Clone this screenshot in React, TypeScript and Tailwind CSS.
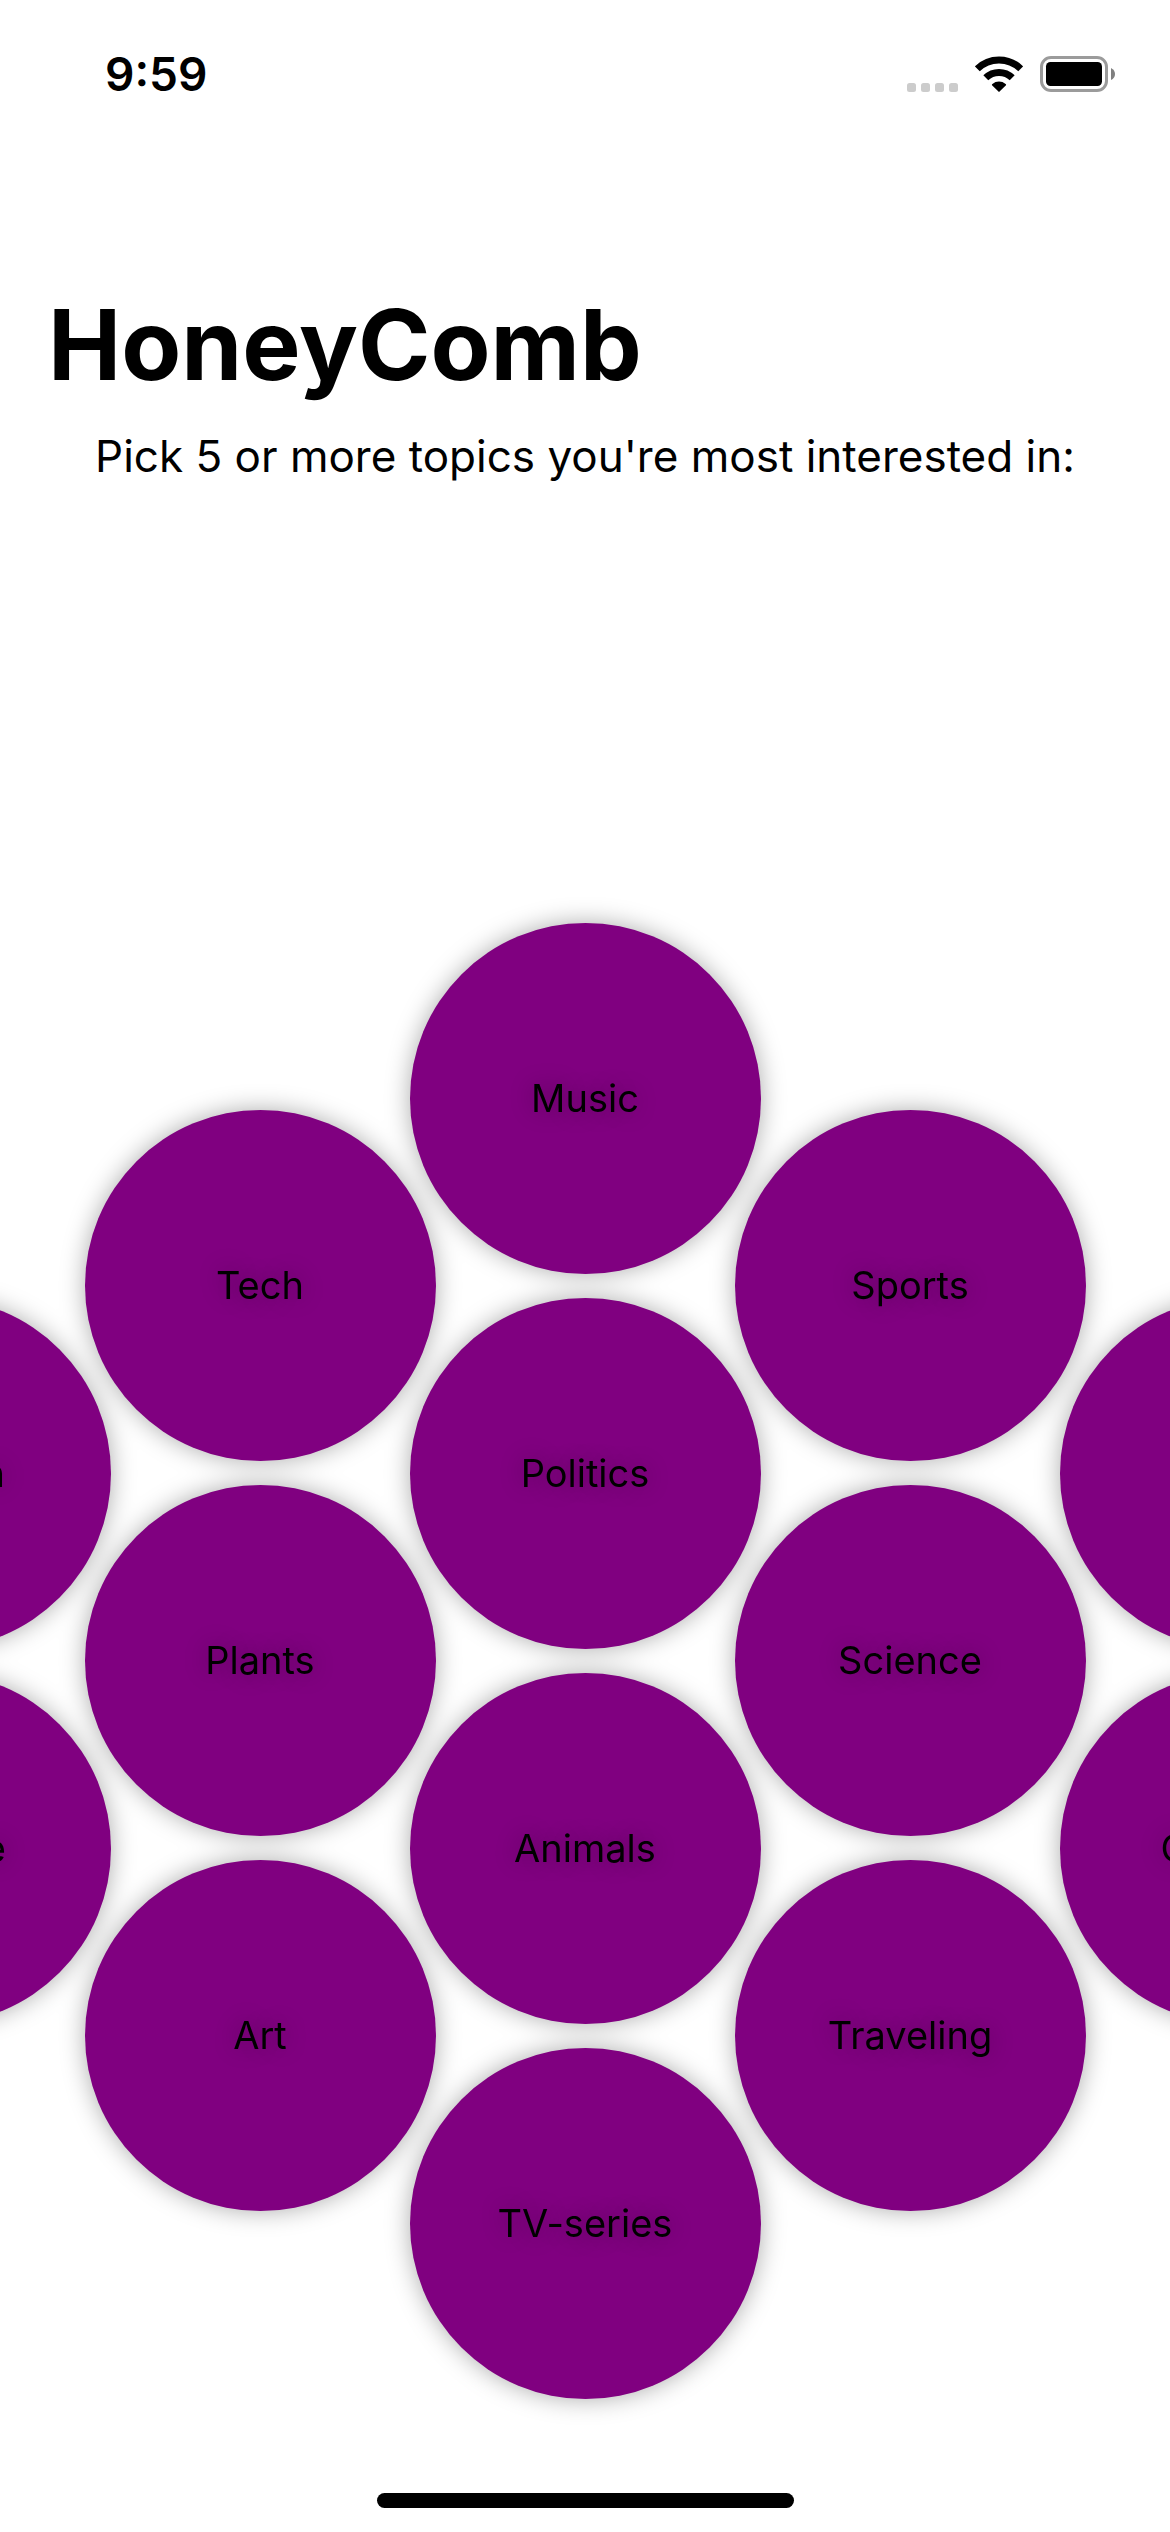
const columns = [
  { offset: "pt-[375px]", topics: ["Fashion", "Finance"] },
  { offset: "pt-[187px]", topics: ["Tech", "Plants", "Art"] },
  { offset: "pt-0", topics: ["Music", "Politics", "Animals", "TV-series"] },
  { offset: "pt-[187px]", topics: ["Sports", "Science", "Traveling"] },
  { offset: "pt-[375px]", topics: ["Food", "Cooking"] },
];

function StatusBar() {
  return (
    <div className="flex h-[148px] items-center justify-between pr-[55px] pl-[105px]">
      <time className="text-[46px] leading-[56px] font-semibold">9:59</time>
      <div className="flex h-9 items-center gap-[17px]">
        <svg width="51" height="36" viewBox="0 0 51 36" fill="#cccccc" aria-label="No signal">
          <rect x="0" y="27" width="9" height="9" rx="2.5" />
          <rect x="14" y="27" width="9" height="9" rx="2.5" />
          <rect x="28" y="27" width="9" height="9" rx="2.5" />
          <rect x="42" y="27" width="9" height="9" rx="2.5" />
        </svg>
        <svg width="48" height="36" viewBox="0 0 48 36" aria-label="Wi-Fi">
          <path d="M2.3 12.8A31 31 0 0 1 45.7 12.8" fill="none" stroke="#000" strokeWidth="7" />
          <path d="M10.8 21.8A18.8 18.8 0 0 1 37.2 21.8" fill="none" stroke="#000" strokeWidth="7" />
          <path d="M24 36L17 29.2Q16.6 28.4 17.4 27.9A10.6 10.6 0 0 1 30.6 27.9Q31.4 28.4 31 29.2Z" />
        </svg>
        <svg width="75" height="36" viewBox="0 0 75 36" aria-label="Battery full">
          <rect x="1.5" y="1.5" width="65" height="33" rx="9.5" fill="none" stroke="#9b9b9b" strokeWidth="3" />
          <rect x="6" y="6" width="56" height="24" rx="4.5" />
          <path d="M71 12Q75 14 75 18Q75 22 71 24Z" fill="#808080" />
        </svg>
      </div>
    </div>
  );
}

export default function App() {
  return (
    <div className="flex min-h-screen w-full flex-col overflow-hidden bg-white font-['Inter',sans-serif] text-black">
      <StatusBar />
      <header className="pt-[136px]">
        <h1 className="px-12 text-[98px] leading-[122px] font-bold">HoneyComb</h1>
        <p className="pt-[22px] text-center text-[44px] leading-[56px]">
          Pick 5 or more topics you're most interested in:
        </p>
      </header>
      <main className="mt-[439px] flex items-start justify-center -space-x-[26px] drop-shadow-[0_0_12px_rgba(0,0,0,0.33)]">
        {columns.map((column) => (
          <div key={column.topics[0]} className={`flex shrink-0 flex-col gap-6 ${column.offset}`}>
            {column.topics.map((topic) => (
              <button
                key={topic}
                type="button"
                className="size-[351px] rounded-full bg-[#800080] pb-[2px] text-[38px] leading-[48px] [text-shadow:0_0_24px_rgba(0,0,0,0.33)]"
              >
                {topic}
              </button>
            ))}
          </div>
        ))}
      </main>
      <div className="mx-auto mt-auto mb-6 h-[15px] w-[417px] shrink-0 rounded-full bg-black" />
    </div>
  );
}
